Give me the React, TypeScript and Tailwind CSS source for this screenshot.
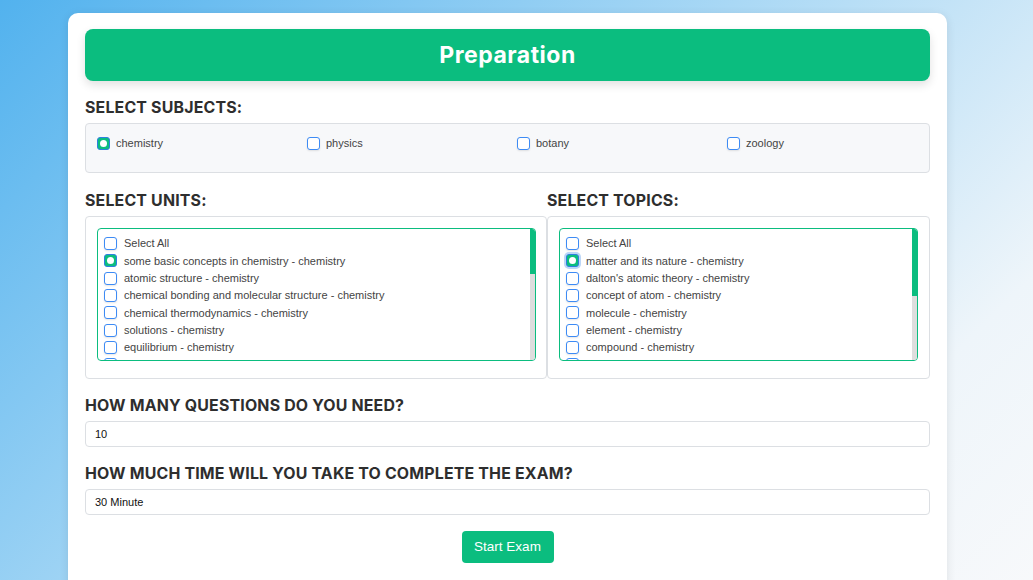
import { useState } from "react";

const subjects = ["chemistry", "physics", "botany", "zoology"];

const units = [
    "some basic concepts in chemistry",
    "atomic structure",
    "chemical bonding and molecular structure",
    "chemical thermodynamics",
    "solutions",
    "equilibrium",
    "redox reactions and electrochemistry",
    "chemical kinetics",
    "classification of elements and periodicity in properties",
    "p-block elements",
    "d and f block elements",
    "co-ordination compounds",
    "purification and characterisation of organic compounds",
    "some basic principles of organic chemistry",
    "hydrocarbons",
    "organic compounds containing halogens",
    "organic compounds containing oxygen",
    "organic compounds containing nitrogen",
    "biomolecules",
    "principles related to practical chemistry",
];

const topics = [
    "matter and its nature",
    "dalton's atomic theory",
    "concept of atom",
    "molecule",
    "element",
    "compound",
    "laws of chemical combination",
    "atomic and molecular masses",
    "mole concept",
    "molar mass",
    "percentage composition",
    "empirical and molecular formulae",
    "chemical equations and stoichiometry",
    "precision and accuracy",
];

function Box({ checked, focused }: { checked: boolean; focused?: boolean }) {
    if (checked) {
        return (
            <span
                className={`flex h-[13px] w-[13px] shrink-0 items-center justify-center rounded-[3px] border border-[#2f7fe0] bg-[#0bbd7f] ${focused ? "ring-2 ring-[#bcd6f7]" : ""}`}
            >
                <span className="h-[7px] w-[7px] rounded-full bg-white" />
            </span>
        );
    }
    return <span className="h-[13px] w-[13px] shrink-0 rounded-[3px] border border-[#3d8bf5] bg-white shadow-[0_1px_2px_rgba(0,0,0,0.1)]" />;
}

function CheckList({ items, first, thumb, focused }: { items: string[]; first: string; thumb: number; focused?: boolean }) {
    const [picked, setPicked] = useState<string[]>([first]);
    const toggle = (name: string) =>
        setPicked((p) => (p.includes(name) ? p.filter((x) => x !== name) : [...p, name]));

    return (
        <div className="relative h-[133px] overflow-hidden rounded-[4px] border border-[#0bbd7f]">
            <div className="h-full overflow-hidden pl-[6px] pt-[6px] pr-[8px]">
                <div className="flex h-[17.33px] items-center gap-[7px]" onClick={() => setPicked(picked.length === items.length ? [] : items)}>
                    <Box checked={picked.length === items.length} />
                    <span className="text-[11px] text-[#444]">Select All</span>
                </div>
                {items.map((name) => (
                    <div key={name} className="flex h-[17.33px] items-center gap-[7px]" onClick={() => toggle(name)}>
                        <Box checked={picked.includes(name)} focused={focused && name === first} />
                        <span className="whitespace-nowrap text-[11px] text-[#444]">{name} - chemistry</span>
                    </div>
                ))}
            </div>
            {/* scrollbar */}
            <div className="absolute top-0 right-0 bottom-0 w-[5px] bg-[#dedede]">
                <div className="w-full bg-[#0bbd7f]" style={{ height: thumb }} />
            </div>
        </div>
    );
}

function Heading({ children, className = "" }: { children: string; className?: string }) {
    return (
        <h2 className={`h-[20px] text-[15.9px] font-bold uppercase leading-[20px] tracking-[0.18px] text-[#2e2e2e] [font-family:Inter,sans-serif] ${className}`}>
            {children}
        </h2>
    );
}

export default function App() {
    const [subject, setSubject] = useState("chemistry");

    return (
        <div className="min-h-[580px] overflow-hidden bg-[linear-gradient(135deg,#52b2ee_0%,#a9d8f5_45%,#eef5fa_80%,#f8f9fb_100%)] pt-[13px] [font-family:'Liberation_Sans',Arial,sans-serif]">
            <div className="ml-[68px] h-[590px] w-[879px] rounded-[10px] bg-white px-[17px] pt-[16px] shadow-[0_2px_10px_rgba(0,0,0,0.1)]">
                <div className="flex h-[52px] items-center justify-center rounded-[8px] bg-[#0bbd7f] shadow-[0_4px_10px_rgba(0,0,0,0.12)]">
                    <h1 className="text-[23px] font-bold tracking-[0.5px] text-white [font-family:Inter,sans-serif]">Preparation</h1>
                </div>

                <Heading className="mt-[17px] mb-[5px]">Select Subjects:</Heading>
                <div className="grid h-[50px] grid-cols-[210px_210px_210px_1fr] rounded-[4px] border border-[#dcdfe3] bg-[#f7f8fa] pl-[11px] pt-[13px]">
                    {subjects.map((s) => (
                        <label key={s} className="flex h-[13px] items-center gap-[6px]" onClick={() => setSubject(s)}>
                            <Box checked={subject === s} />
                            <span className="text-[11px] text-[#444]">{s}</span>
                        </label>
                    ))}
                </div>

                <div className="mt-[18px] flex">
                    <div className="w-[462px]">
                        <Heading className="mb-[5px]">Select Units:</Heading>
                        <div className="h-[163px] rounded-[4px] border border-[#dcdfe3] pt-[11px] pl-[11px] pr-[10px]">
                            <CheckList items={units} first="some basic concepts in chemistry" thumb={45} />
                        </div>
                    </div>
                    <div className="flex-1">
                        <Heading className="mb-[5px]">Select Topics:</Heading>
                        <div className="h-[163px] rounded-[4px] border border-[#dcdfe3] pt-[11px] pl-[11px] pr-[11px]">
                            <CheckList items={topics} first="matter and its nature" thumb={67} focused />
                        </div>
                    </div>
                </div>

                <Heading className="mt-[17px] mb-[5px]">How many questions do you need?</Heading>
                <div className="flex h-[26px] items-center rounded-[4px] border border-[#dcdfe3] px-[9px] text-[11px] text-[#111]">10</div>

                <Heading className="mt-[17px] mb-[5px]">How much time will you take to complete the exam?</Heading>
                <div className="flex h-[26px] items-center rounded-[4px] border border-[#dcdfe3] px-[9px] text-[11px] text-[#111]">30 Minute</div>

                <div className="mt-[16px] flex justify-center">
                    <button className="h-[32px] w-[92px] rounded-[4px] bg-[#0bbd7f] pt-[1px] text-[13.5px] text-white">Start Exam</button>
                </div>
            </div>
        </div>
    );
}
